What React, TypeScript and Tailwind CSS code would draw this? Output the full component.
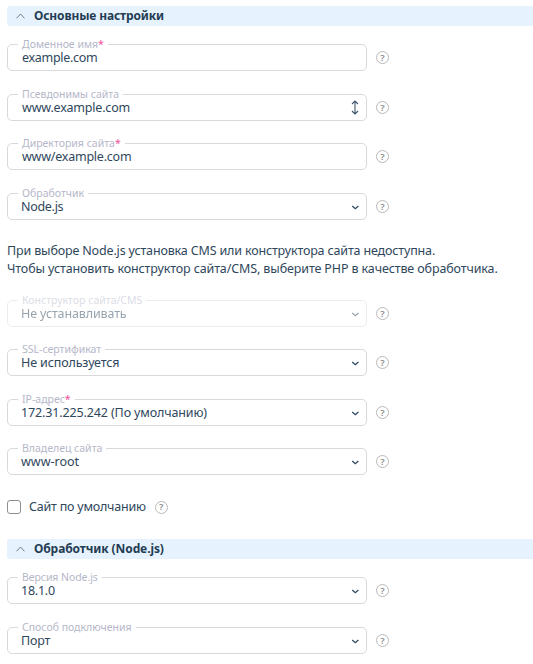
import clsx from "clsx";
import type { ReactNode } from "react";

function Help() {
  return (
    <span className="flex size-[13px] shrink-0 items-center justify-center rounded-full border border-[#b9b9b9] text-[9.5px] leading-none font-semibold text-[#8c8c8c]">
      ?
    </span>
  );
}

function Chevron() {
  return (
    <svg className="mt-px h-[5px] w-[8px]" viewBox="0 0 8 5" fill="none" stroke="#2f4a60" strokeWidth="1.3">
      <path d="M1.2 0.9 4.3 3.7 7.4 0.9" />
    </svg>
  );
}

function ResizeArrow() {
  return (
    <svg className="h-[15px] w-[8px]" viewBox="0 0 8 15" fill="none" stroke="#40566b" strokeWidth="1.1">
      <path d="M4 1v13M1 4 4 1 7 4M1 11 4 14 7 11" />
    </svg>
  );
}

function SectionHeader({ children, className }: { children: ReactNode; className?: string }) {
  return (
    <div className={clsx("ml-[7px] flex h-5 items-center rounded-l-[3px] bg-[#e7f2ff] pl-[9px]", className)}>
      <svg className="h-[6px] w-[9px]" viewBox="0 0 9 6" fill="none" stroke="#5c6f80" strokeWidth="0.9">
        <path d="M0.5 5.3 4.5 1 8.5 5.3" />
      </svg>
      <h2 className="ml-[9px] text-[12px] leading-5 font-bold whitespace-nowrap text-[#233c52]">{children}</h2>
    </div>
  );
}

type FieldProps = {
  label: string;
  value: string;
  kind?: "text" | "area" | "select";
  required?: boolean;
  disabled?: boolean;
  className?: string;
  labelClass?: string;
  valueClass?: string;
};

function Field({ label, value, kind = "select", required, disabled, className, labelClass, valueClass }: FieldProps) {
  return (
    <div className={clsx("ml-[7px] flex h-[27px] items-center", className)}>
      <div
        className={clsx(
          "relative flex h-full w-[360px] items-center justify-between rounded-[5px] border border-[#d9d9d9] pr-[7px]",
          kind === "select" ? "pl-[13px]" : "pl-[14px]",
          disabled && "opacity-50"
        )}
      >
        <span className="absolute -top-[8px] left-[10px] bg-white px-[4px] text-[10.5px] leading-[14px] whitespace-nowrap text-[#b5b7c9]">
          <span className={labelClass}>{label}</span>
          {required && <span className="text-[#f0509b]">*</span>}
        </span>
        <span className={clsx("relative text-[12.5px] leading-[18px] whitespace-nowrap", valueClass)}>{value}</span>
        {kind === "select" && <Chevron />}
        {kind === "area" && <ResizeArrow />}
      </div>
      <div className="ml-[9px]">
        <Help />
      </div>
    </div>
  );
}

export default function App() {
  return (
    <div className="h-[664px] w-[533px] overflow-hidden bg-white pt-[6px] font-['Noto_Sans','Open_Sans',sans-serif] text-[#2f475c]">
      <SectionHeader>
        <span className="tracking-[-0.13px]">Основные настройки</span>
      </SectionHeader>

      <Field className="mt-[18px]" label="Доменное имя" value="example.com" kind="text" required valueClass="tracking-[-0.3px]" />
      <Field className="mt-[23px]" label="Псевдонимы сайта" value="www.example.com" kind="area" valueClass="tracking-[-0.2px]" />
      <Field className="mt-[22px]" label="Директория сайта" value="www/example.com" kind="text" required valueClass="tracking-[-0.23px]" />
      <Field className="mt-[23px]" label="Обработчик" value="Node.js" valueClass="tracking-[-0.3px]" />

      <div className="mt-[22px] ml-[7px] text-[12.5px] leading-[18px] whitespace-nowrap">
        <p className="tracking-[-0.155px]">При выборе Node.js установка CMS или конструктора сайта недоступна.</p>
        <p className="tracking-[-0.118px]">Чтобы установить конструктор сайта/CMS, выберите PHP в качестве обработчика.</p>
      </div>

      <Field className="mt-[22px]" label="Конструктор сайта/CMS" value="Не устанавливать" disabled valueClass="tracking-[-0.13px]" />
      <Field className="mt-[22px]" label="SSL-сертификат" value="Не используется" valueClass="tracking-[-0.13px]" />
      <Field className="mt-[23px]" label="IP-адрес" value="172.31.225.242 (По умолчанию)" required valueClass="tracking-[-0.13px]" />
      <Field className="mt-[22px]" label="Владелец сайта" value="www-root" />

      <div className="mt-[23px] ml-[7px] flex h-[18px] items-center">
        <span className="size-[14px] rounded-[3px] border border-[#8f8f8f]" />
        <span className="ml-[8px] text-[12.5px] tracking-[-0.22px] whitespace-nowrap">Сайт по умолчанию</span>
        <span className="ml-[9px]">
          <Help />
        </span>
      </div>

      <SectionHeader className="mt-[23px]">
        <span className="tracking-[-0.1px]">Обработчик (Node.js)</span>
      </SectionHeader>

      <Field className="mt-[18px]" label="Версия Node.js" value="18.1.0" labelClass="tracking-[-0.07px]" valueClass="tracking-[-0.25px]" />
      <Field className="mt-[23px]" label="Способ подключения" value="Порт" valueClass="tracking-[-0.15px]" />
    </div>
  );
}
